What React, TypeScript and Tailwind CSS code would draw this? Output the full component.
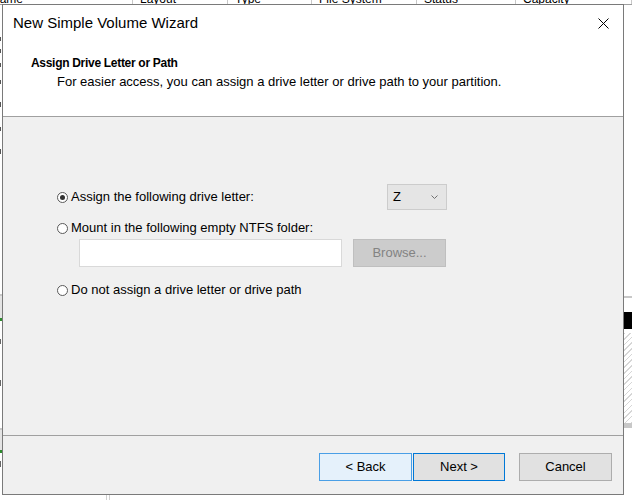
const COLUMNS = [
  { label: "Name", cell: "w-[133px]", text: "ml-[-9px]" },
  { label: "Layout", cell: "w-[95px]", text: "pl-[7px]" },
  { label: "Type", cell: "w-[84px]", text: "pl-[7px]" },
  { label: "File System", cell: "w-[105px]", text: "pl-[7px]" },
  { label: "Status", cell: "w-[99px]", text: "pl-[7px]" },
  { label: "Capacity", cell: "flex-1", text: "pl-[7px]" },
];

function Background() {
  return (
    <div className="flex h-full flex-col">
      {/* volume list header, almost all hidden under the wizard */}
      <div className="flex h-[5px] overflow-hidden border-b border-[#a0a0a0]">
        {COLUMNS.map((c) => (
          <div
            key={c.label}
            className={`flex h-full shrink-0 items-end border-r border-[#c8c8c8] text-[12px] leading-[12px] ${c.cell}`}
          >
            <span className={`mb-[-1px] whitespace-nowrap ${c.text}`}>{c.label}</span>
          </div>
        ))}
      </div>

      <div className="flex flex-1">
        <div className="flex w-[2px] flex-col">
          <div className="mt-[32px] h-[4px] w-[1px] bg-[#555]" />
          <div className="mt-[8px] h-[4px] w-[1px] bg-[#555]" />
          <div className="mt-[10px] h-[4px] w-[1px] bg-[#555]" />
          <div className="mt-[13px] h-[4px] w-[1px] bg-[#555]" />
          <div className="mt-[18px] h-[5px] w-[1px] bg-[#555]" />
          <div className="mt-[20px] h-[4px] w-[1px] bg-[#555]" />
          <div className="mt-[18px] h-[5px] w-[1px] bg-[#555]" />
          <div className="mt-[140px] h-[2px] bg-[#c8c8c8]" />
          <div className="h-[22px] bg-[#e4e4e4]" />
          <div className="h-[3px] bg-[#2e8b2e]" />
          <div className="mt-[18px] h-[5px] w-[1px] bg-[#666]" />
          <div className="mt-[36px] h-[6px] w-[1px] bg-[#666]" />
          <div className="mt-[42px] h-[2px] bg-[#c8c8c8]" />
          <div className="h-[20px] bg-[#e4e4e4]" />
          <div className="h-[3px] bg-[#2e8b2e]" />
          <div className="mt-[8px] h-[6px] w-[1px] bg-[#666]" />
        </div>
        <div className="flex-1" />
        <div className="flex w-[8px] flex-col">
          <div className="h-[291px]" />
          <div className="h-[2px] bg-[#c8c8c8]" />
          <div className="h-[14px]" />
          <div className="h-[17px] bg-black" />
          <div className="h-[4px]" />
          <div className="h-[90px] bg-[repeating-linear-gradient(135deg,#d6d6d6_0px,#d6d6d6_1px,#ffffff_1px,#ffffff_4px)]" />
          <div className="h-[5px] bg-[#c8c8c8]" />
        </div>
      </div>

      <div className="flex h-[6px]">
        <div className="ml-[106px] h-full w-[4px] border-x border-[#d0d0d0]" />
      </div>
    </div>
  );
}

function Radio({ label, checked = false }: { label: string; checked?: boolean }) {
  return (
    <div className="flex h-[16px] items-center gap-[3px]">
      <span className="flex h-[11px] w-[11px] items-center justify-center rounded-full border border-[#5a5a5a] bg-white">
        {checked && <span className="h-[5px] w-[5px] rounded-full bg-[#333]" />}
      </span>
      <span className="text-[13px] leading-[16px] whitespace-nowrap">{label}</span>
    </div>
  );
}

function WizardDialog() {
  return (
    <div className="absolute left-[2px] top-[4px] flex h-[491px] w-[622px] flex-col border border-[#7a7a7a] bg-[#f0f0f0]">
      <div className="h-[112px] border-b border-[#a0a0a0] bg-white">
        <div className="flex h-[36px] items-center justify-between pl-[10px] pr-[14px]">
          <span className="text-[15px] leading-[18px]">New Simple Volume Wizard</span>
          <svg width="11" height="11" viewBox="0 0 11 11" fill="none" stroke="#000" strokeWidth="1">
            <path d="M0.5 0.5L10.5 10.5M10.5 0.5L0.5 10.5" />
          </svg>
        </div>
        <div className="pl-[28px] pt-[15px] text-[12px] font-bold leading-[14px] tracking-[-0.3px]">
          Assign Drive Letter or Path
        </div>
        <div className="mt-[4px] pl-[54px] text-[13px] leading-[16px]">
          For easier access, you can assign a drive letter or drive path to your partition.
        </div>
      </div>

      <div className="flex-1 pl-[54px] pt-[67px]">
        <div className="flex h-[26px] w-[390px] items-center justify-between">
          <Radio label="Assign the following drive letter:" checked />
          <div className="flex h-[26px] w-[60px] items-center justify-between border border-[#cccccc] bg-[#e5e5e5] pl-[5px] pr-[8px]">
            <span className="text-[13px] leading-[16px]">Z</span>
            <svg width="7" height="4" viewBox="0 0 7 4" fill="none" stroke="#707070" strokeWidth="1">
              <path d="M0.5 0.5L3.5 3.5L6.5 0.5" />
            </svg>
          </div>
        </div>
        <div className="mt-[10px]">
          <Radio label="Mount in the following empty NTFS folder:" />
        </div>
        <div className="mt-[3px] flex gap-[11px] pl-[22px]">
          <div className="h-[28px] w-[263px] border border-[#d9d9d9] bg-white" />
          <div className="flex h-[28px] w-[93px] items-center justify-center border border-[#bfbfbf] bg-[#cccccc] text-[13px] text-[#838383]">
            Browse...
          </div>
        </div>
        <div className="mt-[15px]">
          <Radio label="Do not assign a drive letter or drive path" />
        </div>
      </div>

      <div className="flex h-[59px] items-start justify-end border-t border-[#a0a0a0] pr-[11px] pt-[17px]">
        <button className="h-[28px] w-[93px] border border-[#4a9fe6] bg-[#e5f1fb] text-[13px]">
          &lt; Back
        </button>
        <button className="ml-[1px] h-[28px] w-[92px] border border-[#0078d7] bg-[#e1e1e1] text-[13px]">
          Next &gt;
        </button>
        <button className="ml-[14px] h-[28px] w-[93px] border border-[#adadad] bg-[#e1e1e1] text-[13px]">
          Cancel
        </button>
      </div>
    </div>
  );
}

export default function App() {
  return (
    <div className="relative h-[500px] w-[632px] overflow-hidden bg-white font-['Liberation_Sans',Arial,sans-serif] text-black">
      <Background />
      <WizardDialog />
    </div>
  );
}
